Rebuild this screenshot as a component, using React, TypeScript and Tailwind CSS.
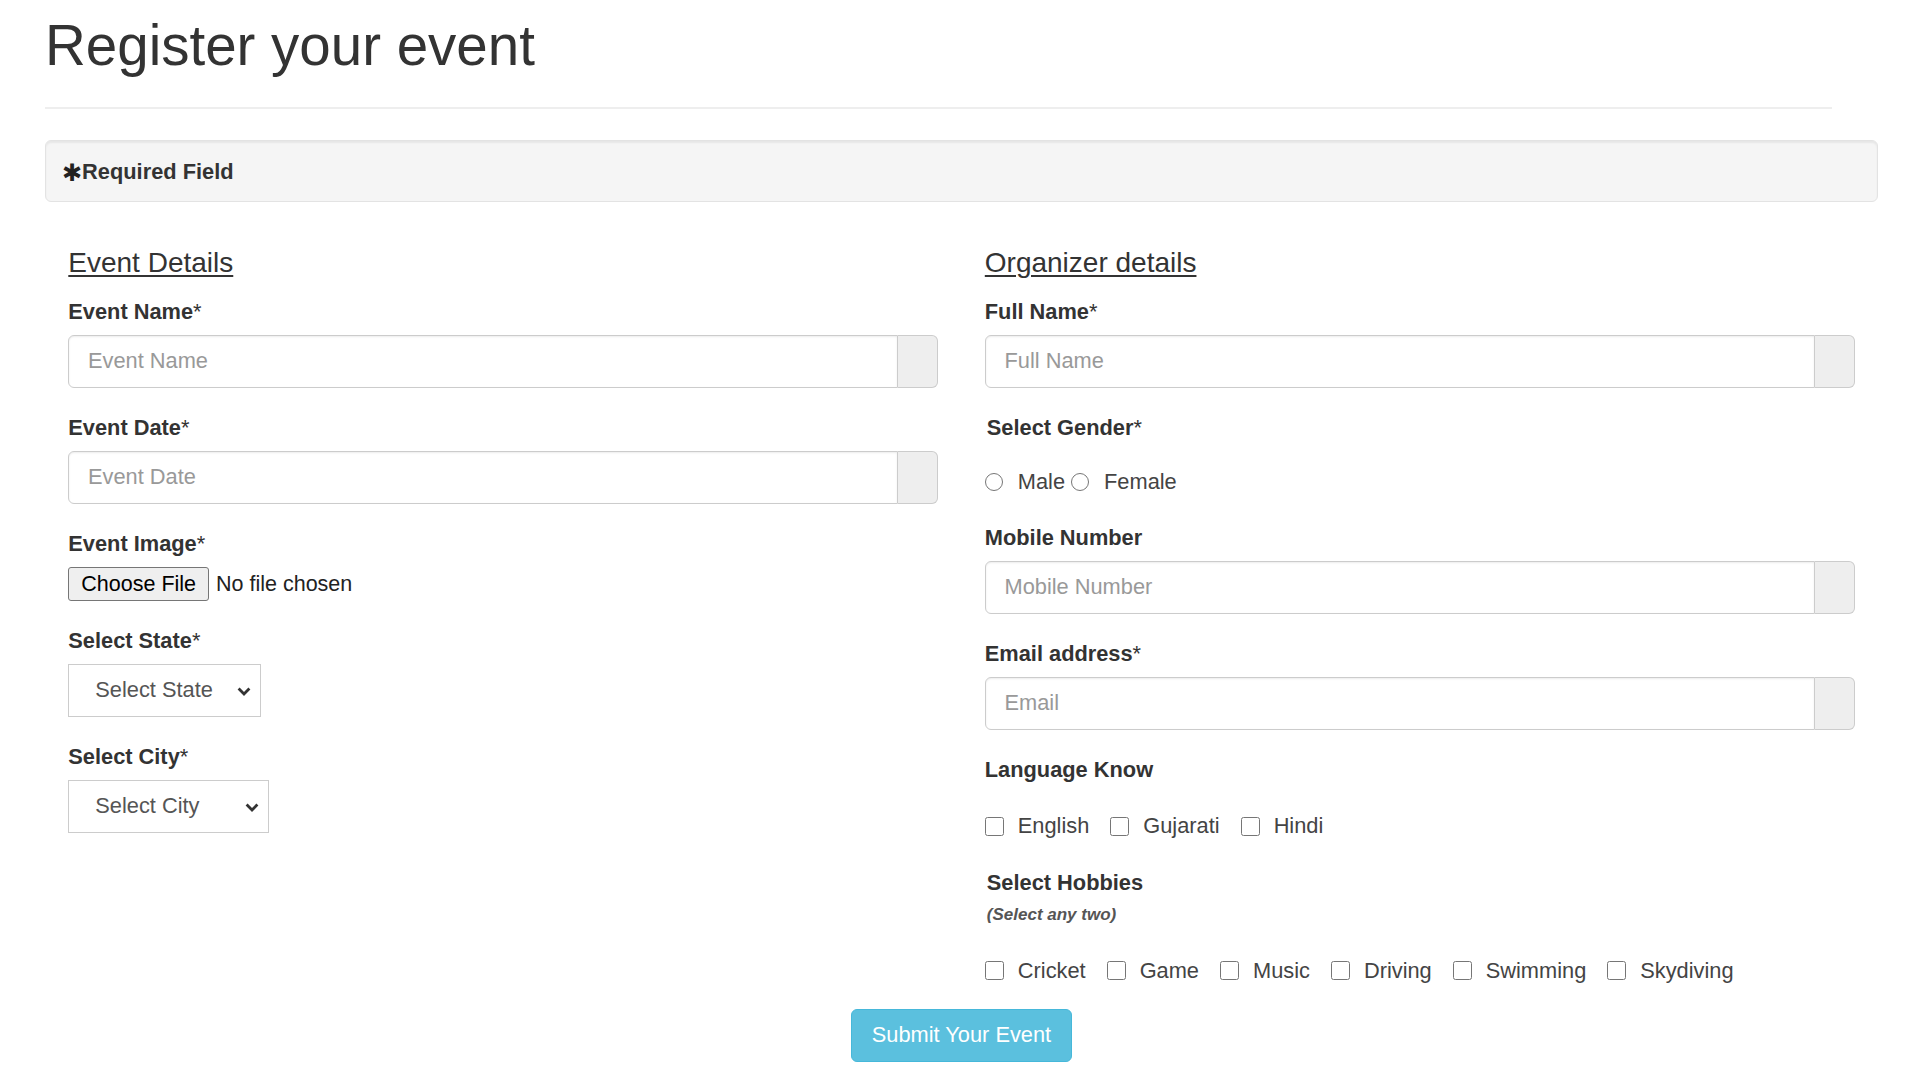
import { useState } from "react";

const Chevron = () => (
  <svg width="14" height="9" viewBox="0 0 14 9" className="pointer-events-none absolute right-[9px] top-[22px]">
    <path d="M1.6 1.6 L7 7 L12.4 1.6" fill="none" stroke="#333" strokeWidth="2.8" strokeLinejoin="miter" />
  </svg>
);

const Label = ({ text, star, className = "" }: { text: string; star?: boolean; className?: string }) => (
  <label className={`block h-[31px] text-[21.8px] font-bold leading-[31px] text-[#333] ${className}`}>
    {text}
    {star && <span className="font-normal">*</span>}
  </label>
);

const InputGroup = ({ placeholder, type = "text" }: { placeholder: string; type?: string }) => (
  <div className="flex h-[53px] w-full">
    <input
      type={type}
      placeholder={placeholder}
      className="h-full flex-1 rounded-l-[6px] border border-[#ccc] bg-white px-[18.7px] text-[21.8px] text-[#555] shadow-[inset_0_1px_2px_rgba(0,0,0,0.08)] outline-none placeholder:text-[#999]"
    />
    <span className="h-full w-[40px] rounded-r-[6px] border border-l-0 border-[#ccc] bg-[#eee]" />
  </div>
);

const Check = ({ label, last }: { label: string; last?: boolean }) => (
  <label className={`flex items-center gap-[14px] ${last ? "" : "mr-[21px]"}`}>
    <input type="checkbox" className="m-0 h-[19px] w-[19px]" />
    <span className="text-[21.8px] text-[#444]">{label}</span>
  </label>
);

export default function App() {
  const [state, setState] = useState<string>("");
  const [city, setCity] = useState<string>("");

  return (
    <div className="min-h-screen bg-white font-['Liberation_Sans',Arial,sans-serif] text-[#333]">
      <div className="ml-[45px] w-[1833px] pt-[15px]">
        <h1 className="text-[56.5px] leading-[1.1] text-[#333]">Register your event</h1>
        <div className="mt-[30px] h-[2px] w-[1787px] bg-[#eee]" />

        {/* required note */}
        <div className="mt-[31px] flex h-[62px] items-center rounded-[6px] border border-[#e3e3e3] bg-[#f5f5f5] px-[16px] pt-[3px] shadow-[inset_0_2px_2px_rgba(0,0,0,0.06)]">
          <span className="font-['DejaVu_Sans',sans-serif] text-[24px] leading-none text-[#222]">✱</span>
          <span className="text-[21.8px] font-bold text-[#333]">Required Field</span>
        </div>

        <div className="mt-[46px] grid grid-cols-2">
          {/* event details */}
          <div className="px-[23.3px]">
            <h4 className="mb-[17px] text-[28px] leading-[1.1] underline decoration-[1.5px] underline-offset-[3px]">Event Details</h4>

            <Label text="Event Name" star className="mb-[8px]" />
            <InputGroup placeholder="Event Name" />

            <Label text="Event Date" star className="mb-[8px] mt-[24px]" />
            <InputGroup placeholder="Event Date" />

            <Label text="Event Image" star className="mb-[8px] mt-[24px]" />
            <div className="flex h-[34px] items-center">
              <button className="h-[34px] rounded-[3px] border border-[#767676] bg-[#efefef] px-[12px] text-[21.5px] text-black">
                Choose File
              </button>
              <span className="ml-[7px] text-[21.5px] text-[#222]">No file chosen</span>
            </div>

            <Label text="Select State" star className="mb-[8px] mt-[24px]" />
            <div className="relative h-[53px] w-[193px] border border-[#ccc] bg-white">
              <select
                value={state}
                onChange={(e: React.ChangeEvent<HTMLSelectElement>) => setState(e.target.value)}
                className="h-full w-full appearance-none bg-transparent pl-[26px] text-[21.8px] text-[#555] outline-none"
              >
                <option value="">Select State</option>
                <option value="GJ">Gujarat</option>
                <option value="MH">Maharashtra</option>
              </select>
              <Chevron />
            </div>

            <Label text="Select City" star className="mb-[8px] mt-[24px]" />
            <div className="relative h-[53px] w-[201px] border border-[#ccc] bg-white">
              <select
                value={city}
                onChange={(e: React.ChangeEvent<HTMLSelectElement>) => setCity(e.target.value)}
                className="h-full w-full appearance-none bg-transparent pl-[26px] text-[21.8px] text-[#555] outline-none"
              >
                <option value="">Select City</option>
                <option value="AMD">Ahmedabad</option>
                <option value="SRT">Surat</option>
              </select>
              <Chevron />
            </div>
          </div>

          {/* organizer details */}
          <div className="px-[23.3px]">
            <h4 className="mb-[17px] text-[28px] leading-[1.1] underline decoration-[1.5px] underline-offset-[3px]">Organizer details</h4>

            <Label text="Full Name" star className="mb-[8px]" />
            <InputGroup placeholder="Full Name" />

            <Label text="Select Gender" star className="mt-[24px] pl-[2px]" />
            <div className="mt-[23.5px] flex h-[31px] items-center">
              <label className="mr-[6px] flex items-center gap-[15px]">
                <input type="radio" name="gender" className="m-0 h-[18px] w-[18px]" />
                <span className="text-[21.8px] text-[#444]">Male</span>
              </label>
              <label className="flex items-center gap-[15px]">
                <input type="radio" name="gender" className="m-0 h-[18px] w-[18px]" />
                <span className="text-[21.8px] text-[#444]">Female</span>
              </label>
            </div>

            <Label text="Mobile Number" className="mb-[8px] mt-[24.5px]" />
            <InputGroup placeholder="Mobile Number" />

            <Label text="Email address" star className="mb-[8px] mt-[24px]" />
            <InputGroup placeholder="Email" type="email" />

            <Label text="Language Know" className="mt-[24.5px]" />
            <div className="mt-[25.5px] flex h-[31px] items-center">
              <Check label="English" />
              <Check label="Gujarati" />
              <Check label="Hindi" last />
            </div>

            <Label text="Select Hobbies" className="mt-[25px] pl-[2px]" />
            <p className="mt-[5px] h-[24px] pl-[2px] text-[17px] font-bold italic leading-[24px] text-[#555]">(Select any two)</p>
            <div className="mt-[28.5px] flex h-[31px] items-center">
              <Check label="Cricket" />
              <Check label="Game" />
              <Check label="Music" />
              <Check label="Driving" />
              <Check label="Swimming" />
              <Check label="Skydiving" last />
            </div>
          </div>
        </div>

        <div className="mt-[22.5px] flex justify-center">
          <button className="h-[53px] rounded-[6px] border border-[#46b8da] bg-[#5bc0de] px-[20px] text-[21.8px] text-white">
            Submit Your Event
          </button>
        </div>
      </div>
    </div>
  );
}
